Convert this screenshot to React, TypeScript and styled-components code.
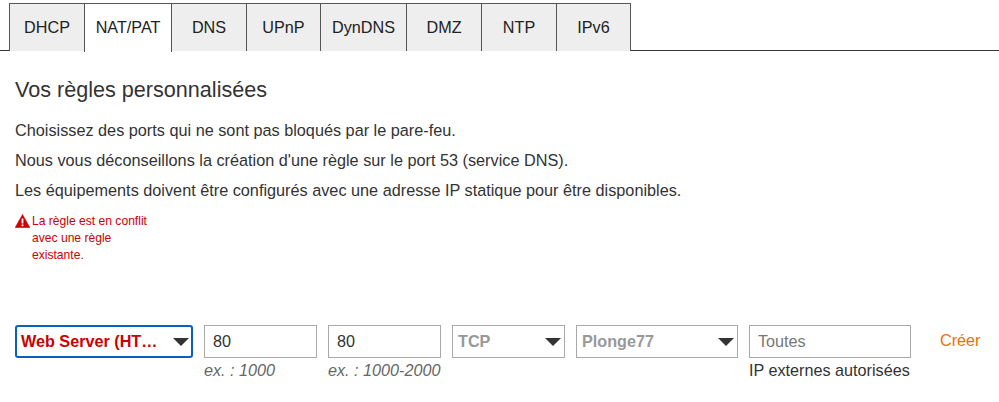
import React from "react";
import styled, { createGlobalStyle } from "styled-components";

const Global = createGlobalStyle`
  html, body { margin: 0; padding: 0; background: #fff; }
  body { font-family: "Liberation Sans", Arial, sans-serif; color: #333; overflow: hidden; }
`;

const Page = styled.div`
  width: 999px;
  height: 402px;
  padding-top: 3px;
  box-sizing: border-box;
`;

const TabBar = styled.div`
  display: flex;
  height: 47px;
  padding-left: 9px;
  border-bottom: 1px solid #333;
  box-sizing: content-box;
`;

const Tab = styled.div<{ $w: number; $active?: boolean }>`
  width: ${(p) => p.$w}px;
  height: ${(p) => (p.$active ? 47 : 46)}px;
  margin-left: -1px;
  &:first-child { margin-left: 0; }
  box-sizing: content-box;
  border: 1px solid #555;
  border-bottom: none;
  background: ${(p) => (p.$active ? "#fff" : "#eee")};
  display: flex;
  align-items: center;
  justify-content: center;
  padding-bottom: 1px;
  font-size: 16.2px;
  color: #222;
  position: relative;
`;

const Content = styled.div`
  padding: 26px 15px 0;
`;

const Title = styled.h2`
  margin: 0 0 17px;
  font-size: 21.6px;
  line-height: 26px;
  font-weight: 400;
  color: #333;
`;

const Para = styled.p`
  margin: 0 0 10px;
  font-size: 16.26px;
  line-height: 20px;
  color: #333;
`;

const ErrorBox = styled.div`
  display: flex;
  align-items: flex-start;
  gap: 2px;
  width: 140px;
  margin-top: 13px;
  height: 112px;
  color: #cc0000;
  font-size: 12.1px;
  line-height: 17px;
`;

const ErrorIcon = styled.svg`
  flex: none;
  width: 15px;
  height: 14px;
  margin-top: 1px;
`;

const FormRow = styled.div`
  display: flex;
  align-items: flex-start;
  gap: 11px;
`;

const Field = styled.div<{ $w: number }>`
  width: ${(p) => p.$w}px;
  flex: none;
`;

const Control = styled.div<{ $focus?: boolean; $muted?: boolean; $placeholder?: boolean }>`
  height: 33px;
  box-sizing: border-box;
  display: flex;
  align-items: center;
  justify-content: space-between;
  background: #fff;
  border: ${(p) => (p.$focus ? "2px solid #0a5fc4" : "1px solid #a9a9a9")};
  border-radius: ${(p) => (p.$focus ? "3px" : "0")};
  padding: 0 5px 0 8px;
  font-size: 16.2px;
  color: ${(p) => (p.$placeholder ? "#777" : "#333")};
`;

const SelectControl = styled(Control)`
  padding: ${(p) => (p.$focus ? "0 2px 1px 4px" : "0 3px 1px 5px")};
  font-weight: 700;
  color: ${(p) => (p.$focus ? "#cc0000" : "#999")};
`;

const Arrow = styled.span`
  width: 0;
  height: 0;
  flex: none;
  border-left: 8px solid transparent;
  border-right: 8px solid transparent;
  border-top: 8px solid #333;
  margin-top: 1px;
`;

const Hint = styled.div<{ $plain?: boolean }>`
  margin-top: 3px;
  font-size: 16.2px;
  line-height: 19px;
  white-space: nowrap;
  color: ${(p) => (p.$plain ? "#333" : "#666")};
  font-style: ${(p) => (p.$plain ? "normal" : "italic")};
`;

const CreateLink = styled.a`
  margin: 6px 0 0 18px;
  font-size: 16.2px;
  line-height: 19px;
  color: #f16e00;
`;

const tabs: [string, number, boolean?][] = [
  ["DHCP", 74],
  ["NAT/PAT", 86, true],
  ["DNS", 74],
  ["UPnP", 73],
  ["DynDNS", 85],
  ["DMZ", 74],
  ["NTP", 74],
  ["IPv6", 73],
];

export default function App() {
  return (
    <Page>
      <Global />
      <TabBar>
        {tabs.map(([label, w, active]) => (
          <Tab key={label} $w={w} $active={active}>
            {label}
          </Tab>
        ))}
      </TabBar>
      <Content>
        <Title>Vos règles personnalisées</Title>
        <Para>Choisissez des ports qui ne sont pas bloqués par le pare-feu.</Para>
        <Para>Nous vous déconseillons la création d'une règle sur le port 53 (service DNS).</Para>
        <Para>Les équipements doivent être configurés avec une adresse IP statique pour être disponibles.</Para>
        <ErrorBox>
          <ErrorIcon viewBox="0 0 15 14">
            <path d="M7.5 0.5 L14.8 13.5 H0.2 Z" fill="#cc0000" stroke="#cc0000" strokeWidth="0.6" strokeLinejoin="round" />
            <rect x="6.6" y="4.5" width="1.8" height="5" fill="#fff" />
            <rect x="6.6" y="10.4" width="1.8" height="1.8" fill="#fff" />
          </ErrorIcon>
          <span>
            La règle est en conflit
            <br />
            avec une règle
            <br />
            existante.
          </span>
        </ErrorBox>
        <FormRow>
          <Field $w={178}>
            <SelectControl $focus>
              <span>Web Server (HT…</span>
              <Arrow />
            </SelectControl>
          </Field>
          <Field $w={113}>
            <Control>80</Control>
            <Hint>ex. : 1000</Hint>
          </Field>
          <Field $w={113}>
            <Control>80</Control>
            <Hint>ex. : 1000-2000</Hint>
          </Field>
          <Field $w={113}>
            <SelectControl>
              <span>TCP</span>
              <Arrow />
            </SelectControl>
          </Field>
          <Field $w={162}>
            <SelectControl>
              <span>Plonge77</span>
              <Arrow />
            </SelectControl>
          </Field>
          <Field $w={162}>
            <Control $placeholder>Toutes</Control>
            <Hint $plain>IP externes autorisées</Hint>
          </Field>
          <CreateLink>Créer</CreateLink>
        </FormRow>
      </Content>
    </Page>
  );
}
